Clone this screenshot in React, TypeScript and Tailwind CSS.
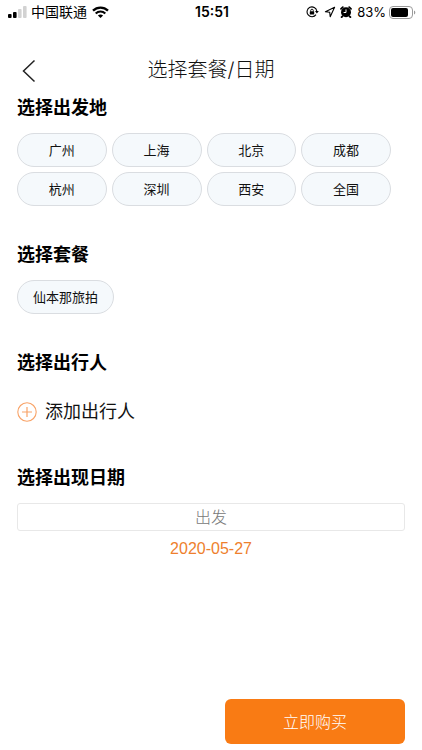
import type { ReactNode } from "react";

const cities = ["广州", "上海", "北京", "成都", "杭州", "深圳", "西安", "全国"];
const packages = ["仙本那旅拍"];

function StatusBar() {
  return (
    <div className="grid h-6 grid-cols-[1fr_auto_1fr] items-center pr-1.5 pl-2 text-sm leading-6 text-black">
      <div className="flex items-center gap-1">
        <svg width="19" height="12" viewBox="0 0 19 12" aria-hidden="true">
          <rect x="0" y="8" width="3.6" height="4" rx="1" fill="#000" />
          <rect x="5" y="6" width="3.6" height="6" rx="1" fill="#000" />
          <rect x="10" y="3" width="3.6" height="9" rx="1" fill="#d2d2d2" />
          <rect x="15" y="0" width="3.6" height="12" rx="1" fill="#d2d2d2" />
        </svg>
        <span className="whitespace-nowrap">中国联通</span>
        <svg className="ml-px" width="17" height="12" viewBox="0 0 17 12" fill="none" aria-hidden="true">
          <path d="M1 4.6C5.2.5 11.8.5 16 4.6" stroke="#000" strokeWidth="2.3" />
          <path d="M3.7 7.4c2.7-2.6 6.9-2.6 9.6 0" stroke="#000" strokeWidth="2.1" />
          <path d="M8.5 12 5.9 9.4c1.5-1.3 3.7-1.3 5.2 0Z" fill="#000" />
        </svg>
      </div>
      <div className="text-center font-semibold">15:51</div>
      <div className="flex items-center justify-end">
        <svg width="13" height="12" viewBox="0 0 13 12" fill="none" aria-hidden="true">
          <path d="M10 8.6A4.9 4.9 0 1 1 10.8 5" stroke="#000" strokeWidth="1.1" />
          <path d="M9 5h3.800L10.900 7.500Z" fill="#000" />
          <rect x="3.8" y="5.3" width="4.4" height="3.3" rx=".5" fill="#000" />
          <path d="M4.700 5.500v-1a1.300 1.300 0 0 1 2.600 0v1" stroke="#000" strokeWidth=".9" />
        </svg>
        <svg className="ml-[5px]" width="12" height="12" viewBox="0 0 12 12" fill="none" aria-hidden="true">
          <path d="M10.600 1.300 1.400 5.700l4.300.6.500 4.400Z" stroke="#000" strokeWidth="1.1" strokeLinejoin="round" />
        </svg>
        <svg className="ml-1" width="12" height="12" viewBox="0 0 12 12" fill="none" aria-hidden="true">
          <circle cx="6" cy="6.2" r="5" fill="#000" />
          <path d="M1 2.800 2.800 1.200M11 2.800 9.200 1.200M2.400 10.300l-.8.900M9.600 10.300l.8.900" stroke="#000" strokeWidth="1.8" strokeLinecap="round" />
          <path d="M6 3.400v3.100H3.600" stroke="#fff" strokeWidth="1" />
        </svg>
        <span className="ml-[5px] text-[13px]">83%</span>
        <svg className="ml-[3px] shrink-0" width="27" height="13" viewBox="0 0 27 13" fill="none" aria-hidden="true">
          <rect x=".5" y=".5" width="23" height="12" rx="3.5" stroke="#9a9a9a" />
          <rect x="2" y="2" width="17" height="9" rx="2" fill="#000" />
          <path d="M25 4.500c1.800.6 1.800 3.400 0 4Z" fill="#9a9a9a" />
        </svg>
      </div>
    </div>
  );
}

function Heading({ children }: { children: ReactNode }) {
  return <h2 className="text-lg leading-7 font-bold text-black">{children}</h2>;
}

function Pill({ children }: { children: ReactNode }) {
  return (
    <button
      type="button"
      className="h-[34px] rounded-full border border-[#dadde1] bg-[#f5f9fc] px-[15px] text-[13px] leading-5 text-[#111]"
    >
      {children}
    </button>
  );
}

export default function App() {
  return (
    <div className="flex min-h-screen flex-col bg-white font-['Inter','Noto_Sans_CJK_SC',sans-serif]">
      <StatusBar />
      <header className="mt-7 grid h-9 grid-cols-[1fr_auto_1fr] items-center px-[17px]">
        <button type="button" aria-label="返回" className="flex h-9 w-9 items-center pt-0.5 pl-[5px]">
          <svg width="14" height="24" viewBox="0 0 14 24" fill="none" aria-hidden="true">
            <path d="M12.500 1.500 1.500 12l11 10.500" stroke="#222" strokeWidth="1.5" />
          </svg>
        </button>
        <h1 className="text-xl leading-7 font-light text-[#111]">选择套餐/日期</h1>
      </header>

      <main className="flex flex-col px-[17px]">
        <section className="mt-1.5">
          <Heading>选择出发地</Heading>
          <div className="mt-[11px] mr-3.5 grid grid-cols-4 gap-[5px]">
            {cities.map((city) => (
              <Pill key={city}>{city}</Pill>
            ))}
          </div>
        </section>

        <section className="mt-[35px]">
          <Heading>选择套餐</Heading>
          <div className="mt-[11px] flex gap-[5px]">
            {packages.map((name) => (
              <Pill key={name}>{name}</Pill>
            ))}
          </div>
        </section>

        <section className="mt-[35px]">
          <Heading>选择出行人</Heading>
          <button type="button" className="mt-[21px] flex items-center gap-2 text-lg leading-7 text-[#111]">
            <svg width="20" height="20" viewBox="0 0 20 20" fill="none" stroke="#f8a368" aria-hidden="true">
              <circle cx="10" cy="10" r="9.2" strokeWidth="1.1" />
              <path d="M10 5v10M5 10h10" strokeWidth="1.2" />
            </svg>
            添加出行人
          </button>
        </section>

        <section className="mt-[38px]">
          <Heading>
            <label htmlFor="departure">选择出现日期</label>
          </Heading>
          <input
            id="departure"
            type="text"
            placeholder="出发"
            className="mt-[11px] block h-7 w-full rounded-[3px] border border-[#e8e8e8] bg-white text-center text-base leading-6 font-light placeholder:text-[#777]"
          />
          <p className="mt-1.5 text-center font-['Liberation_Sans',sans-serif] text-base leading-6 text-[#ee7f2d]">
            2020-05-27
          </p>
        </section>
      </main>

      <footer className="mt-auto flex justify-end px-[17px] pt-6 pb-1.5">
        <button type="button" className="h-[45px] w-[180px] rounded-md bg-[#f97b14] text-base leading-6 font-light text-white">
          立即购买
        </button>
      </footer>
    </div>
  );
}
